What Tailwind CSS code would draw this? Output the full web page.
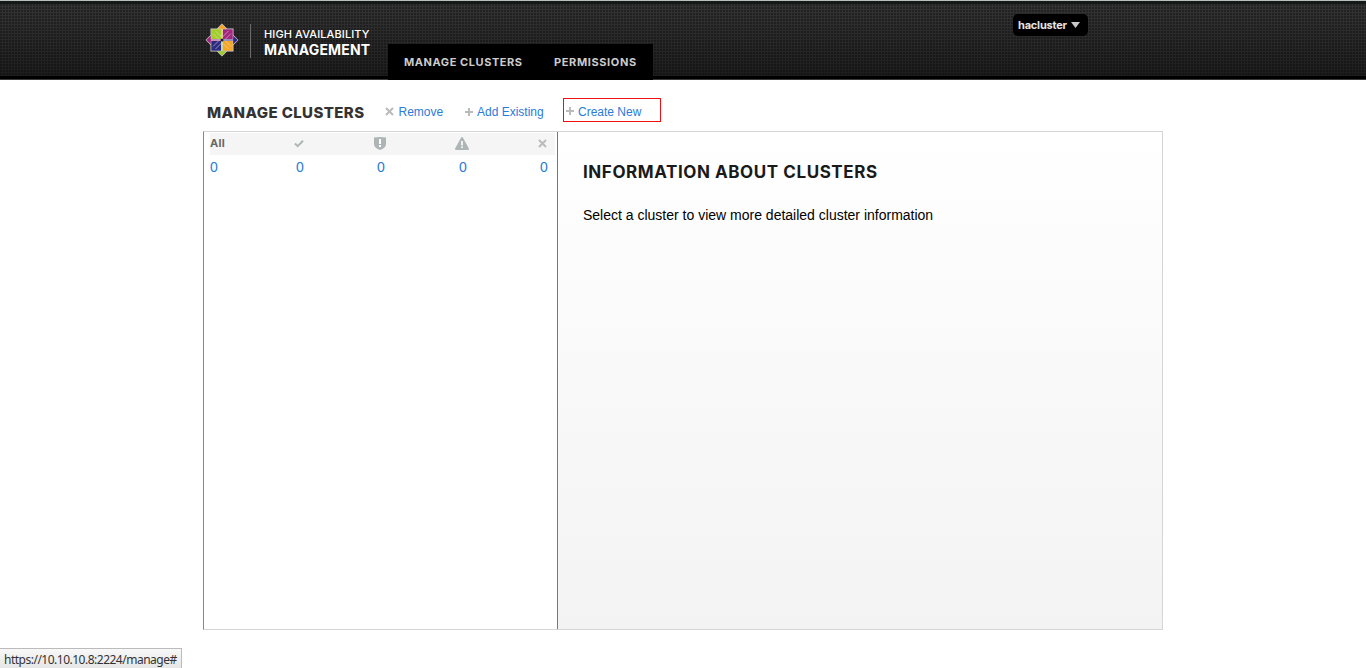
<!DOCTYPE html>
<html lang="en">
<head>
<meta charset="utf-8">
<title>High Availability Management</title>
<script src="https://cdn.jsdelivr.net/npm/@tailwindcss/browser@4"></script>
</head>
<body class="relative h-[668px] overflow-hidden bg-white font-['Liberation_Sans',Arial,sans-serif]">
<header class="h-20 border-t border-b border-t-[#b9c0bc] border-b-[#3a3a3a] bg-black">
  <div class="h-[75px] border-t-[3px] border-[#141a17] bg-[radial-gradient(circle_at_1px_1px,rgba(0,0,0,.5)_0.6px,transparent_0.9px),linear-gradient(#343434,#1d1d1d)] bg-[size:3px_3px,100%_100%]">
    <div class="mx-auto flex w-[960px] items-start">
      <svg class="mt-[19px] mr-px ml-[2px] h-[34px] w-[34px] shrink-0" viewBox="0 0 34 34">
        <path d="M17 .5l5 5h6.500V12l5 5-5 5v6.500H22l-5 5-5-5H5.500V22l-5-5 5-5V5.500H12z" fill="#cfc8d2"/>
        <path d="M6.300 6.300h10v10h-10z" fill="#a2cf26"/><path d="M17.700 6.300h10v10h-10z" fill="#a0267f"/>
        <path d="M6.300 17.700h10v10h-10z" fill="#2b2b80"/><path d="M17.700 17.700h10v10h-10z" fill="#f5a623"/>
        <path d="M17 1.300l4.200 4.500h-3.300v10h-1.800v-10h-3.300z" fill="#f5a623"/><path d="M32.700 17l-4.500 4.200v-3.300h-10v-1.800h10v-3.300z" fill="#2b2b80"/>
        <path d="M17 32.700l-4.200-4.500h3.300v-10h1.800v10h3.300z" fill="#9ccd2a"/><path d="M1.300 17l4.500-4.200v3.300h10v1.800h-10v3.300z" fill="#a0267f"/>
        <path d="M16.500 5.800v10.700H5.800M17.500 5.800v10.700h10.700M16.500 28.200V17.500H5.800M17.500 28.200V17.500h10.700M8 10.500l6 6M10.500 8l6 6M26 10.500l-6 6M23.500 8l-6 6M8 23.500l6-6M10.500 26l6-6M26 23.500l-6-6M23.500 26l-6-6" stroke="#e5dfe5" stroke-opacity=".7" stroke-width=".8" fill="none"/>
        <circle cx="17" cy="17" r="1.500" fill="#222"/>
      </svg>
      <div class="mt-5 ml-[10px] h-[34px] w-px bg-[#6a6a6a]"></div>
      <div class="mt-[23px] ml-[13px] w-[124px] whitespace-nowrap font-['Inter',sans-serif] text-white">
        <div class="text-[11px] leading-[15px] font-medium tracking-[0.1px]">HIGH AVAILABILITY</div>
        <div class="text-[14px] leading-[15px] font-bold tracking-[0.17px]">MANAGEMENT</div>
      </div>
      <nav class="mt-10 flex h-9 w-[265px] shrink-0 whitespace-nowrap bg-black pl-4 font-['Inter',sans-serif] text-[11px] leading-[36px] font-bold text-[#ccc]">
        <a class="w-[150px] tracking-[0.56px]">MANAGE CLUSTERS</a>
        <a class="tracking-[0.62px]">PERMISSIONS</a>
      </nav>
      <div class="mt-[10px] ml-auto mr-[75px] flex h-[22px] w-[75px] items-center rounded-[5px] bg-black pl-[5px] font-['Inter',sans-serif] text-[11px] font-bold text-[#e5e5e5]">
        <span class="w-[53px] tracking-[-0.2px]">hacluster</span>
        <svg class="-mt-px h-[6px] w-[9px]" viewBox="0 0 9 6"><path d="M0 0h9L4.500 6z" fill="#c8c8c8"/></svg>
      </div>
    </div>
  </div>
</header>
<main class="mx-auto w-[960px]">
  <div class="flex h-[51px] items-start whitespace-nowrap pt-[18px] pl-[5px] text-[12px] leading-6 text-[#2b7bd9]">
    <h1 class="mt-[3px] -ml-px w-[178px] font-['Inter',sans-serif] text-[15px] leading-6 font-extrabold tracking-[0.41px] text-[#333]">MANAGE CLUSTERS</h1>
    <a class="mt-[2px] flex w-[80px] items-center"><svg class="-mt-[2px] mr-[4.500px] h-[9px] w-[9px]" viewBox="0 0 9 9"><path d="M1 1l7 7M8 1L1 8" stroke="#bbb" stroke-width="2"/></svg>Remove</a>
    <a class="mt-[2px] flex w-[98px] items-center"><svg class="-mt-px mr-[4px] h-[8px] w-[8px]" viewBox="0 0 8 8"><path d="M4 0v8M0 4h8" stroke="#bbb" stroke-width="2"/></svg>Add Existing</a>
    <a class="flex h-6 w-[98px] items-center border border-[#ee1111] pt-[3px] pl-[2px]"><svg class="-mt-px mr-[4px] h-[8px] w-[8px]" viewBox="0 0 8 8"><path d="M4 0v8M0 4h8" stroke="#bbb" stroke-width="2"/></svg>Create New</a>
  </div>
  <div class="flex h-[499px] border border-[#d5d5d5] border-l-[#888]">
    <section class="w-[354px] border-r border-[#777] text-[14px] text-[#2b7bd9]">
      <div class="mt-px mr-[2px] ml-[6px] flex h-[22px] items-center bg-[#f5f5f5] pb-[2px]">
        <span class="w-[84px] pt-px font-['Inter',sans-serif] text-[11px] font-bold tracking-[0.3px] text-[#666]">All</span>
        <svg class="mr-[70px] h-[9px] w-[10px]" viewBox="0 0 10 9"><path d="M1 4.500l2.700 2.700L9 1.800" fill="none" stroke="#adb5b7" stroke-width="2"/></svg>
        <svg class="mr-[69px] h-[13px] w-[12px]" viewBox="0 0 12 13"><path d="M0 .5q6-1 12 0v6.500c0 3-3 5-6 6-3-1-6-3-6-6z" fill="#adb5b7"/><path d="M5 2h2v5H5zM5 8h2v2H5z" fill="#fff"/></svg>
        <svg class="mr-[69px] h-[13px] w-[14px]" viewBox="0 0 14 13"><path d="M6 .7q1-1.300 2 0l6 11q.2 1.300-1 1.300H1q-1.200 0-1-1.300z" fill="#adb5b7"/><path d="M6.200 4h1.600v4.500H6.200zM6.200 9.500h1.600V11H6.200z" fill="#fff"/></svg>
        <svg class="h-[9px] w-[9px]" viewBox="0 0 9 9"><path d="M1 1l7 7M8 1L1 8" stroke="#bbb" stroke-width="2"/></svg>
      </div>
      <div class="flex h-6 items-center pl-[6px]"><a class="w-[86px]">0</a><a class="w-[81px]">0</a><a class="w-[82px]">0</a><a class="w-[81px]">0</a><a>0</a></div>
    </section>
    <section class="flex-1 bg-gradient-to-b from-white to-[#f3f3f3] pt-7 pl-[25px]">
      <h2 class="whitespace-nowrap font-['Inter',sans-serif] text-[17px] leading-6 font-bold tracking-[0.57px] text-[#1a1a1a]">INFORMATION ABOUT CLUSTERS</h2>
      <p class="mt-[21px] text-[14px] leading-5 text-black">Select a cluster to view more detailed cluster information</p>
    </section>
  </div>
</main>
<div class="absolute bottom-0 left-0 h-5 w-[182px] whitespace-nowrap border-t border-r border-[#bbb] bg-gradient-to-b from-[#f8f8f8] to-[#e6e6e6] pl-1 font-['Noto_Sans',sans-serif] text-[12px] leading-[21px] tracking-[-0.5px] text-[#333]">https://10.10.10.8:2224/manage#</div>
</body>
</html>
